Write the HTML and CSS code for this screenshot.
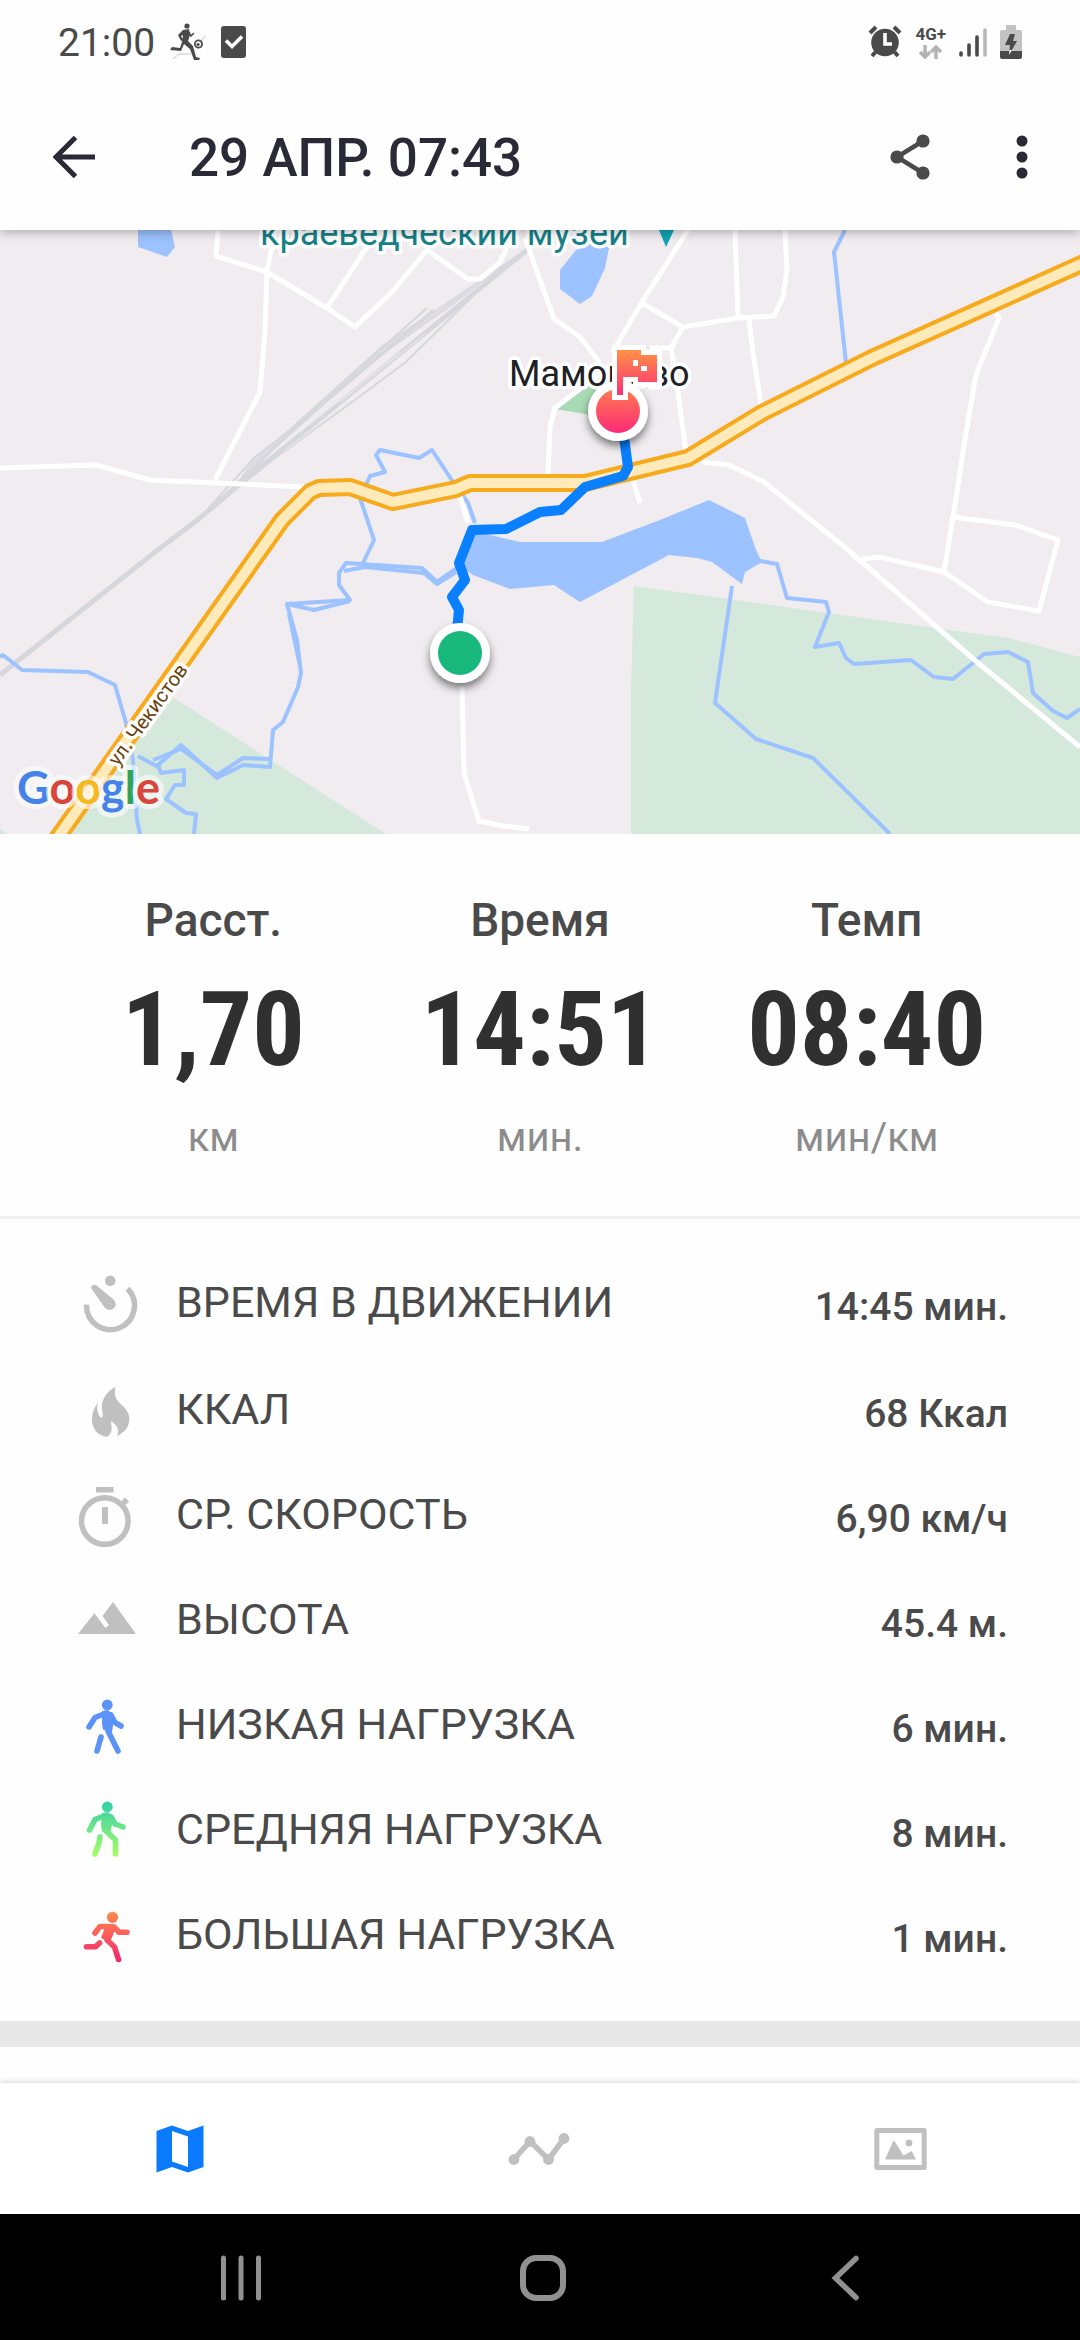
FILE: index.html
```html
<!DOCTYPE html>
<html lang="ru">
<head>
<meta charset="utf-8">
<meta name="viewport" content="width=device-width, initial-scale=1">
<title>29 АПР. 07:43</title>
<link rel="stylesheet" href="styles.css">
</head>
<body>
<div class="screen">

  <div class="status">
    <div class="status-group">
      <span class="clock">21:00</span>
      <svg class="status-runner" viewBox="0 0 38 38" aria-hidden="true">
        <g fill="none" stroke="#c8c8c8" stroke-width="1"><path d="M4 36l6-5h12M30 22l6-9"/></g>
        <circle cx="18" cy="3" r="2.600" fill="#4a4a4a"/>
        <path d="M14 7l6-1 1 6-2 6 5 5 3 11 4 1-1 2h-5l-4-11-6-5-3 7-11-1 2-3 8 1 2-6 1-7-2 1 2 4-2 1-3-6z" fill="#4a4a4a"/>
        <path d="M20 9l2 4 3-3" fill="none" stroke="#4a4a4a" stroke-width="1.500"/>
        <circle cx="29.500" cy="21" r="3.600" fill="none" stroke="#4a4a4a" stroke-width="1.800"/>
        <circle cx="29" cy="21.500" r="1.500" fill="#4a4a4a"/>
      </svg>
      <svg class="status-check" viewBox="0 0 25 32" aria-hidden="true">
        <rect width="25" height="32" rx="3" fill="#4a4a4a"/>
        <path d="M5 14.500l6 6 10-10" fill="none" stroke="#fff" stroke-width="3.600"/>
      </svg>
    </div>
    <div class="status-group status-right">
      <svg class="status-alarm" viewBox="0 0 34 34" aria-hidden="true">
        <circle cx="17" cy="17.500" r="13.800" fill="#4a4a4a"/>
        <path d="M7.500 27l-3.500 4M26.500 27l3.500 4M2 8l6-6M26 2l6 6" stroke="#4a4a4a" stroke-width="4"/>
        <path d="M17 8v11h7" fill="none" stroke="#fff" stroke-width="3.600"/>
      </svg>
      <div class="network">
        <span class="network-type">4G+</span>
        <svg class="network-arrows" viewBox="0 0 24 14" aria-hidden="true">
          <path d="M6 0v11M1 7l5 5 5-5M17 14V3M12 7l5-5 5 5" fill="none" stroke="#b4b4b4" stroke-width="3.500"/>
        </svg>
      </div>
      <svg class="status-signal" viewBox="0 0 28 32" aria-hidden="true">
        <g stroke-width="3.600" stroke-linecap="round"><path d="M2 27v2M10 19v10M18 11v18" stroke="#4a4a4a"/><path d="M26 4v25" stroke="#b8b8b8"/></g>
      </svg>
      <svg class="status-battery" viewBox="0 0 22 34" aria-hidden="true">
        <path d="M6 0h10v5h4q2 0 2 2v19H0V7q0-2 2-2h4z" fill="#c2c2c2"/>
        <path d="M0 26h22v6q0 2-2 2H2q-2 0-2-2z" fill="#4a4a4a"/>
        <path d="M10 9h5l-2 7h4l-8 14 1-10H5z" fill="#4a4a4a"/>
        <path d="M9.500 25h2.500l-3 5z" fill="#fff"/>
      </svg>
    </div>
  </div>

  <header class="appbar">
    <button class="icon-button" type="button" aria-label="Назад">
      <svg class="icon-back" viewBox="0 0 42 42" aria-hidden="true"><path d="M42 21H3M22.500 1.500L3 21l19.500 19.500" fill="none" stroke="#2a2936" stroke-width="5"/></svg>
    </button>
    <h1 class="title">29 АПР. 07:43</h1>
    <button class="icon-button" type="button" aria-label="Поделиться">
      <svg class="icon-share" viewBox="0 0 40 46" aria-hidden="true"><path d="M33 7L7 23l26 16" fill="none" stroke="#4a4a4a" stroke-width="4.500"/><g fill="#4a4a4a"><circle cx="33" cy="7" r="6.600"/><circle cx="7" cy="23" r="6.600"/><circle cx="33" cy="39" r="6.600"/></g></svg>
    </button>
    <button class="icon-button" type="button" aria-label="Меню">
      <svg class="icon-more" viewBox="0 0 12 44" aria-hidden="true"><g fill="#2a2936"><circle cx="6" cy="6" r="5.500"/><circle cx="6" cy="22" r="5.500"/><circle cx="6" cy="38" r="5.500"/></g></svg>
    </button>
  </header>

  <main>
    <section class="map" aria-label="Карта маршрута">
      <svg class="map-canvas" viewBox="0 0 1080 604">
        <defs>
          <linearGradient id="finish" x1="0" y1="0" x2="0" y2="1"><stop offset="0" stop-color="#ff7b4f"/><stop offset="1" stop-color="#ff2b78"/></linearGradient>
          <linearGradient id="flag" x1="0" y1="0" x2="0" y2="1"><stop offset="0" stop-color="#ff9146"/><stop offset="1" stop-color="#fb2f76"/></linearGradient>
          <filter id="shadow" x="-50%" y="-50%" width="200%" height="200%"><feDropShadow dx="0" dy="5" stdDeviation="4" flood-color="#000" flood-opacity=".5"/></filter>
        </defs>
        <rect width="1080" height="604" fill="#f0ecf0"/>

        <g fill="#d5e8dc">
          <path d="M634 356L964 402 1008 408 1080 427V604H631V460z"/>
          <path d="M174 468L386 604H60L150 478z"/>
          <path d="M0 598L7 604H0z"/>
        </g>
        <path d="M555 179L598 150V190L586 184z" fill="#a8dab5"/>

        <g class="rail">
          <path d="M525 20L448 78 374 130 275 217 248 248 234 258 252 232 293 196 382 116 448 72z" fill="#dcdce2"/>
          <path d="M527 20L241 253 200 288 155 322 0 445" stroke-width="5"/>
          <path d="M427 78L382 118 293 198 255 227 207 280" stroke-width="2"/>
          <path d="M434 80L331 167 275 217 215 275" stroke-width="3"/>
          <path d="M482 57L406 132 344 178 275 228 245 252" stroke-width="2"/>
          <path d="M390 122L318 184M400 122L300 202M425 104L340 172M350 170L285 220" stroke="#ecebf0" stroke-width="1"/>
        </g>

        <g fill="#9cc2ff">
          <path d="M138 0V17L167 27 175 17 171 0z"/>
          <path d="M576 20L560 40V59L580 74 592 66 605 38 609 18 598 10z"/>
          <path d="M470 303L490 305 520 312H602L660 290 709 270 745 288 756 320 762 332 745 342 742 354 712 332 697 328 669 325 580 372 554 355 510 359 473 345 458 335z"/>
        </g>
        <g class="river">
          <path d="M845 0L834 22 846 133"/>
          <path d="M475 293L468 273 453 252 432 220 419 228 380 220 376 225 385 242 370 246 366 255M360 268L374 310 363 333"/>
          <path d="M457 338L437 352 422 338 346 333 339 343V355L350 370 287 374 297 410 301 443 298 457 283 492 273 500 270 537 243 535 217 548 181 515 158 535 161 543 184 540V555H175L166 569 186 583 196 584 194 604"/>
          <path d="M456 342L437 354 424 343 365 337 344 341M287 374L314 380 350 371M289 384L300 436M270 529L243 528 217 545 181 519 153 530M138 526L160 538"/>
          <path d="M0 427L3 425 22 440 88 442 115 455 126 493 133 530 137 590 140 604"/>
          <path d="M760 331L777 334 787 368 826 372 829 382 815 417 839 413 846 428 854 434 911 430 934 447 953 449 984 424 1008 422 1028 432 1033 463 1053 481 1067 488 1080 479"/>
          <path d="M732 356L715 473 756 509 813 528 890 604"/>
        </g>

        <g class="road">
          <path d="M0 238L96 235 150 250 305 257M267 42L265 100 260 162 215 250"/>
          <path d="M218 0L216 26 267 42 327 78 355 97 391 63 427 20 468 49H480L499 33 506 20V0M267 42L275 0M327 78L370 12"/>
          <path d="M525 8L540 50 554 89 580 107 600 133M688 0L642 72 612 123M642 73L683 97 738 88 774 86 783 67 787 40 785 0M735 0L738 88"/>
          <path d="M683 97L671 118H650M671 118L678 162 686 222M749 90L753 123 762 180M598 145L555 178 550 197 548 245"/>
          <path d="M702 232L729 235 764 252 848 320 977 432 1080 517" stroke-width="5"/>
          <path d="M633 250L640 273M995 82L999 88 976 145 967 197 953 287 944 342 879 327 862 329M953 287L1015 295 1058 310 1039 381 988 372 944 342"/>
          <path d="M462 457L464 543 479 591 503 596 529 599M459 262L468 293" stroke-width="5"/>
        </g>

        <path class="highway-edge" d="M39 634L282 290 310 262 319 258 350 257 393 272 456 259 470 253H585L688 228 762 183 872 128 988 76 1090 30"/>
        <path class="highway-fill" d="M39 634L282 290 310 262 319 258 350 257 393 272 456 259 470 253H585L688 228 762 183 872 128 988 76 1090 30"/>

        <path d="M659 0H674L666 17z" fill="#12a5b5"/>
        <text class="label place" x="260" y="15">краеведческий музей</text>
        <text class="label town" x="509" y="156">Мамоново</text>
        <text class="label street" transform="translate(118 537) rotate(-54)">ул. Чекистов</text>
        <text class="logo" x="17" y="574"><tspan fill="#4583e8">G</tspan><tspan fill="#d8453b">o</tspan><tspan fill="#f4b922">o</tspan><tspan fill="#4583e8">g</tspan><tspan fill="#35a25a">l</tspan><tspan fill="#d8453b">e</tspan></text>

        <path d="M457 400L459 380 452 367 465 350 459 333 472 300 506 299 540 282 561 280 585 257 623 246 628 237 623 200" fill="none" stroke="#0a80ff" stroke-width="10" stroke-linejoin="round"/>
        <circle cx="460" cy="423" r="30" fill="#fff" filter="url(#shadow)"/>
        <circle cx="460" cy="423" r="22" fill="#18b87c"/>
        <circle cx="618" cy="181" r="30" fill="#fff" filter="url(#shadow)"/>
        <circle cx="618" cy="181" r="22" fill="url(#finish)"/>
        <path d="M617 120H641V125H657V152H638V147H623V165H617z" fill="none" stroke="#fff" stroke-width="10"/>
        <path d="M617 120H641V125H657V152H638V147H623V165H617z" fill="url(#flag)"/>
        <path d="M633 130h5v6h-5zM641 136h6v5h-6z" fill="#fff"/>
      </svg>
    </section>

    <section class="stats">
      <div class="stat"><h2 class="stat-name">Расст.</h2><p class="stat-value">1,70</p><p class="stat-unit">км</p></div>
      <div class="stat"><h2 class="stat-name">Время</h2><p class="stat-value">14:51</p><p class="stat-unit">мин.</p></div>
      <div class="stat"><h2 class="stat-name">Темп</h2><p class="stat-value">08:40</p><p class="stat-unit">мин/км</p></div>
    </section>

    <dl class="details">
      <div class="row row-first">
        <svg class="row-icon" viewBox="0 0 64 64" aria-hidden="true"><circle cx="36.300" cy="9.700" r="5.300" fill="#c0c0c0"/><path d="M12.500 33.700a24 24 0 1 0 41-16" fill="none" stroke="#c0c0c0" stroke-width="5.500"/><path d="M17 17q1-4 5-3l17 14q5 5 1 9t-9 0z" fill="#c0c0c0"/></svg>
        <dt>ВРЕМЯ В ДВИЖЕНИИ</dt><dd>14:45 мин.</dd>
      </div>
      <div class="row">
        <svg class="row-icon" viewBox="0 0 64 64" aria-hidden="true"><path d="M41.500 8.700C39 19 44 24 49 28c5 5 7 10 6 16-1 7-6 11-12 14 3-6 0-11-6-15 0 5 3 11-3.600 15.700C25 59 18 51 18 42c0-8 3-13 6-17.700-2 7 0 13 3.400 15.700 3-3 0-8 .4-13C29 19 34 13 41.500 8.700z" fill="#c0c0c0"/></svg>
        <dt>ККАЛ</dt><dd>68 Ккал</dd>
      </div>
      <div class="row">
        <svg class="row-icon" viewBox="0 0 64 64" aria-hidden="true"><circle cx="30.800" cy="38" r="23.300" fill="none" stroke="#c0c0c0" stroke-width="5.500"/><path d="M22 4h17.500v5.500H22zM28 24h6v17h-6zM47 19l4-4.500 4 4-4.500 4.500z" fill="#c0c0c0"/></svg>
        <dt>СР. СКОРОСТЬ</dt><dd>6,90 км/ч</dd>
      </div>
      <div class="row">
        <svg class="row-icon" viewBox="0 0 64 64" aria-hidden="true"><path d="M4 46L20.400 25.300 31.500 40 35 37 28.500 28 39 14 62 46z" fill="#c0c0c0"/></svg>
        <dt>ВЫСОТА</dt><dd>45.4 м.</dd>
      </div>
      <div class="row">
        <svg class="row-icon" viewBox="0 0 64 64" aria-hidden="true">
          <g transform="translate(1 4)" fill="none" stroke="#5b93f7" stroke-width="5.600" stroke-linecap="round" stroke-linejoin="round"><circle cx="32.300" cy="8" r="5.400" fill="#5b93f7" stroke="none"/><path d="M29 17L20 20.500 14 30M36 18L40 25.500 46 29M33 34L43 54M26 40L22 54"/><path d="M27 14.500q5-3 9 1l3 5-2 15-9-3-1-6z" fill="#5b93f7" stroke="none"/></g>
        </svg>
        <dt>НИЗКАЯ НАГРУЗКА</dt><dd>6 мин.</dd>
      </div>
      <div class="row">
        <svg class="row-icon" viewBox="0 0 64 64" aria-hidden="true">
          <defs><linearGradient id="mid" gradientUnits="userSpaceOnUse" x1="0" y1="2" x2="0" y2="58"><stop offset="0" stop-color="#31d0aa"/><stop offset="1" stop-color="#abff63"/></linearGradient></defs>
          <g transform="translate(1 2)" fill="none" stroke="url(#mid)" stroke-width="5.600" stroke-linecap="round" stroke-linejoin="round"><circle cx="32.300" cy="7" r="5.400" fill="url(#mid)" stroke="none"/><path d="M29 16L20 19.500 14.600 30M36 17L40 24 48 27M31 31L40.500 40V54M25 37L24 43 20 54"/><path d="M27 13.500q5-3 9 1l2 5-3 15-8-3-1-6z" fill="url(#mid)" stroke="none"/></g>
        </svg>
        <dt>СРЕДНЯЯ НАГРУЗКА</dt><dd>8 мин.</dd>
      </div>
      <div class="row">
        <svg class="row-icon" viewBox="0 0 64 64" aria-hidden="true">
          <defs><linearGradient id="high" gradientUnits="userSpaceOnUse" x1="0" y1="4" x2="0" y2="54"><stop offset="0" stop-color="#ff8a4c"/><stop offset="1" stop-color="#f3266f"/></linearGradient></defs>
          <g transform="translate(1 5)" fill="none" stroke="url(#high)" stroke-width="5.600" stroke-linecap="round" stroke-linejoin="round"><circle cx="37.500" cy="9.300" r="5.600" fill="url(#high)" stroke="none"/><path d="M33 18.500H25L20 25M39 19L44 24.200H52M32 32L39.500 39 43.500 51.500M24.500 35L20.500 38.800H11.500"/><path d="M28 16h10q3 2 2 6l-5 12-9-4 3-8z" fill="url(#high)" stroke="none"/></g>
        </svg>
        <dt>БОЛЬШАЯ НАГРУЗКА</dt><dd>1 мин.</dd>
      </div>
    </dl>
    <div class="divider"></div>
  </main>

  <nav class="tabs" aria-label="Разделы">
    <button class="tab" type="button" aria-label="Карта">
      <svg class="tab-icon" viewBox="0 0 64 64" aria-hidden="true"><path fill-rule="evenodd" d="M8.500 14L24 8.500 40 14 55.500 8.500V50L40 55.500 24 50 8.500 55.500zM24 14V44.500L40 50V19.500z" fill="#0a7bff"/></svg>
    </button>
    <button class="tab" type="button" aria-label="График">
      <svg class="tab-icon" viewBox="0 0 64 64" aria-hidden="true"><path d="M6 42.500L22 24 40.500 42.500 56 21.500" fill="none" stroke="#c0c0c0" stroke-width="5.500"/><g fill="#c0c0c0"><circle cx="6" cy="42.500" r="5.400"/><circle cx="22" cy="24.500" r="5.400"/><circle cx="40.500" cy="42.500" r="5.400"/><circle cx="56" cy="21.500" r="5.400"/></g></svg>
    </button>
    <button class="tab" type="button" aria-label="Фото">
      <svg class="tab-icon" viewBox="0 0 64 64" aria-hidden="true"><rect x="8.800" y="13.500" width="47.400" height="37" fill="none" stroke="#c0c0c0" stroke-width="5" stroke-linejoin="round"/><path d="M17 42.500L25.700 23 35.500 38.500 43.700 34 48 42.500z" fill="#c0c0c0"/><circle cx="41" cy="26" r="3.400" fill="#c0c0c0"/></svg>
    </button>
  </nav>

  <div class="system-nav">
    <button class="system-button" type="button" aria-label="Недавние"><svg class="system-icon" viewBox="0 0 48 48" aria-hidden="true"><path d="M6.500 5v40M24 5v40M41.500 5v40" stroke="#919191" stroke-width="5" stroke-linecap="round"/></svg></button>
    <button class="system-button" type="button" aria-label="Домой"><svg class="system-icon" viewBox="0 0 48 48" aria-hidden="true"><rect x="4" y="5" width="40" height="40" rx="13" fill="none" stroke="#919191" stroke-width="6"/></svg></button>
    <button class="system-button" type="button" aria-label="Назад"><svg class="system-icon" viewBox="0 0 48 48" aria-hidden="true"><path d="M35 5.500L14.500 25 35 44.500" fill="none" stroke="#919191" stroke-width="5.500" stroke-linecap="round"/></svg></button>
  </div>
</div>
</body>
</html>
```
FILE: styles.css
```css
* {
  box-sizing: border-box;
}

body {
  margin: 0;
  background: #fefefe;
  color: #4a4a4a;
  font-family: Roboto, "Noto Sans", sans-serif;
}

.screen {
  min-height: 100vh;
  display: flex;
  flex-direction: column;
}

button {
  border: 0;
  padding: 0;
  background: none;
  cursor: pointer;
}

svg {
  display: block;
}

/* Status bar */
.status {
  display: flex;
  justify-content: space-between;
  align-items: center;
  height: 84px;
  padding: 0 58px;
}

.status-group {
  display: flex;
  align-items: center;
  gap: 14px;
}

.status-right {
  gap: 13px;
}

.clock {
  padding-top: 2px;
  font-size: 39px;
  line-height: 48px;
}

.status-runner {
  width: 38px;
  height: 38px;
}

.status-check {
  width: 25px;
  height: 32px;
}

.status-alarm {
  width: 34px;
  height: 34px;
}

.network {
  display: flex;
  flex-direction: column;
  align-items: center;
  gap: 2px;
}

.network-type {
  font-size: 17px;
  line-height: 18px;
  font-weight: 700;
}

.network-arrows {
  width: 24px;
  height: 14px;
}

.status-signal {
  width: 28px;
  height: 32px;
}

.status-battery {
  width: 22px;
  height: 34px;
}

/* App bar */
.appbar {
  position: relative;
  z-index: 1;
  display: flex;
  align-items: center;
  height: 146px;
  padding: 0 52px 0 53px;
  box-shadow: 0 2px 10px rgba(0, 0, 0, .3);
  clip-path: inset(0 0 -16px 0);
}

.title {
  flex: 1;
  margin: 2px 0 0 94px;
  color: #2a2936;
  font-size: 53px;
  line-height: 62px;
  font-weight: 500;
}

.icon-back {
  width: 42px;
  height: 42px;
}

.icon-share {
  width: 40px;
  height: 46px;
  margin-right: 86px;
}

.icon-more {
  width: 12px;
  height: 44px;
}

/* Map */
.map-canvas {
  width: 100%;
}

.rail {
  fill: none;
  stroke: #d6d7dd;
}

.river {
  fill: none;
  stroke: #9cc2ff;
  stroke-width: 4;
  stroke-linejoin: round;
}

.road {
  fill: none;
  stroke: #fff;
  stroke-width: 5;
  stroke-linejoin: round;
}

.highway-edge,
.highway-fill {
  fill: none;
  stroke-linejoin: round;
}

.highway-edge {
  stroke: #f6aa1c;
  stroke-width: 18;
}

.highway-fill {
  stroke: #feeaba;
  stroke-width: 10;
}

.label,
.logo {
  paint-order: stroke;
  stroke: #fff;
  stroke-linejoin: round;
}

.label {
  stroke-width: 7;
}

.place {
  fill: #168089;
  font-size: 36px;
}

.town {
  fill: #202124;
  font-size: 36px;
}

.street {
  fill: #6b3f0b;
  font-size: 20px;
}

.logo {
  stroke-width: 10;
  stroke-opacity: .6;
  font-family: Lato, sans-serif;
  font-size: 45px;
  font-weight: 700;
}

/* Summary */
.stats {
  display: grid;
  grid-template-columns: repeat(3, 1fr);
  padding: 60px 50px 54px;
  border-bottom: 3px solid #f0f0f0;
  text-align: center;
}

.stat-name,
.stat-value,
.stat-unit {
  margin: 0;
}

.stat-name {
  font-size: 46px;
  line-height: 52px;
  font-weight: 500;
}

.stat-value {
  padding-top: 4px;
  color: #303031;
  font-family: "DIN Condensed", "Roboto Condensed", "Liberation Sans Narrow", Roboto, sans-serif;
  font-size: 104px;
  line-height: 160px;
  font-weight: 700;
}

.stat-unit {
  margin-top: 4px;
  color: #8c8c8c;
  font-size: 40px;
  line-height: 48px;
}

/* Details */
.details {
  margin: 0;
  padding: 30px 72px 34px 74px;
}

.row {
  display: flex;
  align-items: center;
  min-height: 105px;
}

.row-first {
  min-height: 108px;
}

.row-icon {
  width: 64px;
  height: 64px;
  margin-right: 38px;
}

.row dt {
  flex: 1;
  margin-bottom: 2px;
  font-size: 43px;
  line-height: 50px;
}

.row dd {
  margin: 8px 0 0;
  font-size: 39px;
  line-height: 46px;
  font-weight: 500;
}

.divider {
  height: 26px;
  background: #e8e8e8;
}

/* Bottom bars */
.tabs {
  display: grid;
  grid-template-columns: repeat(3, 1fr);
  margin-top: auto;
  height: 131px;
  background: #fff;
  box-shadow: 0 -1px 6px rgba(0, 0, 0, .16);
}

.tab,
.system-button {
  display: grid;
  place-items: center;
}

.tab-icon {
  width: 64px;
  height: 64px;
}

.system-nav {
  position: relative;
  display: grid;
  grid-template-columns: repeat(3, 1fr);
  height: 126px;
  padding: 0 84px 0 90px;
  background: #000;
}

.system-icon {
  width: 48px;
  height: 48px;
}
```
